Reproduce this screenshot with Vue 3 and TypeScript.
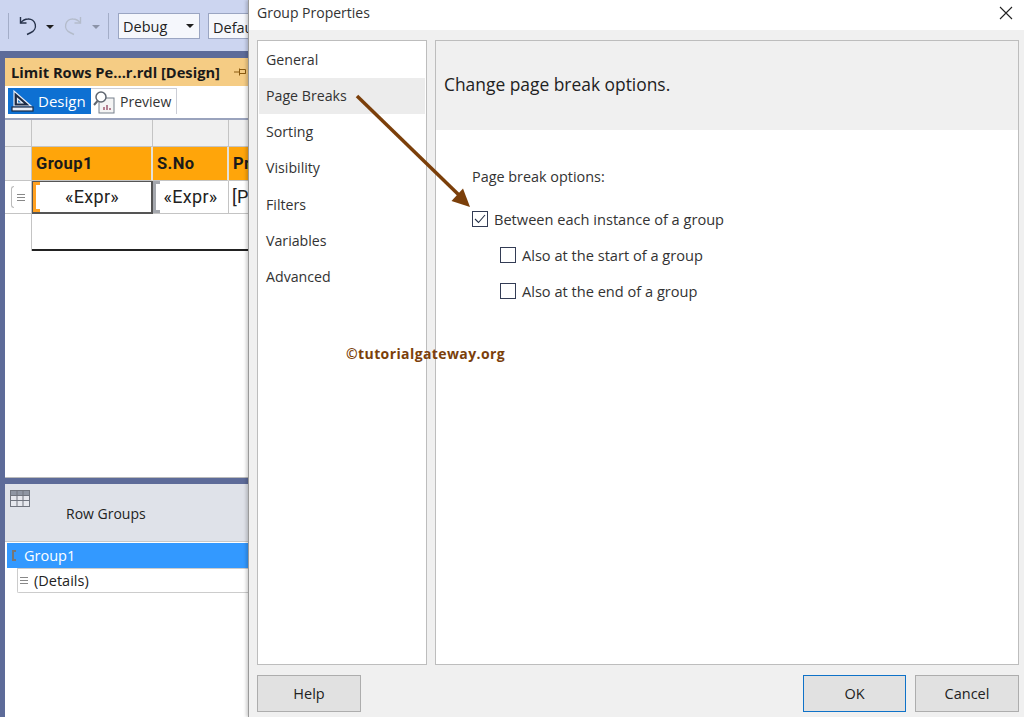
<script setup lang="ts">
const navItems = ['General', 'Page Breaks', 'Sorting', 'Visibility', 'Filters', 'Variables', 'Advanced']
const subOptions = ['Also at the start of a group', 'Also at the end of a group']
</script>

<template>
  <div class="desktop">
    <div class="ide">
      <div class="toolbar">
        <span class="sep"></span>
        <svg class="tool-icon" width="20" height="22" viewBox="0 0 20 22" fill="none" stroke="#26324a" stroke-width="1.4">
          <path d="M2.500 8C5 5 8 4 10 4a7 7 0 0 1 3 13.500L9 19.500" />
          <path d="M2.500 2v6h6" />
        </svg>
        <span class="caret"></span>
        <svg class="tool-icon" width="20" height="22" viewBox="0 0 20 22" fill="none" stroke="#b4bccb" stroke-width="1.4">
          <path d="M17.500 8C15 5 12 4 10 4a7 7 0 0 0-3 13.500l4 2" />
          <path d="M17.500 2v6h-6" />
        </svg>
        <span class="caret off"></span>
        <span class="sep"></span>
        <div class="combo debug">Debug<span class="caret"></span></div>
        <div class="combo">Default</div>
      </div>
      <div class="workspace">
        <div class="doc-tab">
          <span>Limit Rows Pe...r.rdl [Design]</span>
          <svg width="14" height="10" viewBox="0 0 14 10" stroke="#8a5a10" fill="none">
            <path d="M0 5h5M5.500 1.500v7M5.500 2.500h6v4h-6M5.500 6.500h6" />
          </svg>
        </div>
        <div class="view-tabs">
          <div class="view-tab on">
            <svg width="24" height="24" viewBox="0 0 24 24" fill="none" stroke="#fff" stroke-width="1.200">
              <path d="M3 2v15h17L3 2z" fill="#1c2a44" stroke="#e8eef8" />
              <path d="M6.500 9.500v4.500h5z" fill="#0e70c0" stroke="#e8eef8" />
              <rect x="1" y="18" width="21" height="4" fill="#e8eef8" stroke="#1c2a44" />
            </svg>
            <span>Design</span>
          </div>
          <div class="view-tab">
            <svg width="22" height="24" viewBox="0 0 22 24" fill="none">
              <rect x="6" y="8" width="15" height="15" fill="#f4f4f4" stroke="#77808c" />
              <circle cx="8" cy="7" r="5" fill="#fff" stroke="#5f6670" stroke-width="1.500" />
              <path d="M4.500 11 1 15" stroke="#5f6670" stroke-width="2" />
              <path d="M11 20v-3M14 20v-5M17 20v-2" stroke="#a05a70" stroke-width="1.500" />
            </svg>
            <span>Preview</span>
          </div>
        </div>
        <div class="design-surface">
          <div class="tablix">
            <div class="corner"></div>
            <div class="col-head"></div>
            <div class="col-head"></div>
            <div class="col-head last"></div>

            <div class="row-head"></div>
            <div class="hd">Group1</div>
            <div class="hd">S.No</div>
            <div class="hd last">Pr</div>

            <div class="row-head detail">
              <span class="bracket"></span>
              <span class="lines"></span>
            </div>
            <div class="cell selected">
              <span class="handle orange"></span>
              «Expr»
            </div>
            <div class="cell second">
              <span class="handle grey"></span>
              «Expr»
            </div>
            <div class="cell last left">[P</div>

            <div class="blank-side"></div>
            <div class="blank"></div>
          </div>
        </div>
        <div class="groups">
          <div class="groups-head">
            <svg class="grid-icon" width="20" height="17" viewBox="0 0 20 17">
              <rect x="0.500" y="0.500" width="19" height="16" fill="#e6e8ee" stroke="#70757f" />
              <rect x="1" y="1" width="18" height="4" fill="#8f96a3" />
              <path d="M0 5.500h20M0 10.500h20M7 0v17M13 0v17" stroke="#70757f" />
            </svg>
            <span>Row Groups</span>
          </div>
          <div class="groups-list">
            <div class="group-row">
              <span class="group-bracket"></span>
              Group1
            </div>
            <div class="details-row">
              <span class="lines"></span>
              (Details)
            </div>
          </div>
        </div>
      </div>
    </div>

    <div class="dialog">
      <div class="titlebar">
        <span>Group Properties</span>
        <svg width="14" height="14" viewBox="0 0 14 14" stroke="#222" stroke-width="1.100">
          <path d="M1 1l12 12M13 1 1 13" />
        </svg>
      </div>
      <div class="dialog-body">
        <div class="panes">
          <ul class="nav">
            <li v-for="item in navItems" :key="item" :class="{ active: item === 'Page Breaks' }">{{ item }}</li>
          </ul>
          <div class="content">
            <div class="content-head">Change page break options.</div>
            <div class="content-main">
              <div class="opt-title">Page break options:</div>
              <label class="option">
                <span class="check">
                  <svg width="16" height="16" viewBox="0 0 16 16" fill="none" stroke="#26324a" stroke-width="1.100">
                    <path d="M3 8l3.500 3.500L13 4" />
                  </svg>
                </span>
                Between each instance of a group
              </label>
              <label v-for="opt in subOptions" :key="opt" class="option sub">
                <span class="check"></span>
                {{ opt }}
              </label>
              <div class="watermark">©tutorialgateway.org</div>
            </div>
          </div>
        </div>
        <div class="buttons">
          <button class="btn">Help</button>
          <span class="spacer"></span>
          <button class="btn primary">OK</button>
          <button class="btn">Cancel</button>
        </div>
      </div>
    </div>

    <svg class="arrow" width="1024" height="717" viewBox="0 0 1024 717">
      <path d="M357 96 461 197" stroke="#7b3f0a" stroke-width="3.500" fill="none" />
      <path d="M470 207 451.500 201 463 188.500z" fill="#7b3f0a" />
    </svg>
  </div>
</template>

<style scoped>
.desktop {
  position: relative;
  width: 1024px;
  height: 717px;
  overflow: hidden;
  font-family: "Open Sans", "Noto Sans", sans-serif;
  color: #222;
}

.ide {
  width: 248px;
  height: 717px;
  display: flex;
  flex-direction: column;
  background: #5d6b99;
}

.toolbar {
  height: 51px;
  flex-shrink: 0;
  background: #ccd5f0;
  display: flex;
  align-items: center;
  padding: 0 0 0 8px;
  box-sizing: border-box;
  white-space: nowrap;
  overflow: hidden;
}

.sep {
  width: 1px;
  height: 26px;
  flex-shrink: 0;
  background: #a3adc8;
  margin-right: 9px;
}

.tool-icon { flex-shrink: 0; }

.caret {
  width: 0;
  height: 0;
  border-left: 4px solid transparent;
  border-right: 4px solid transparent;
  border-top: 4px solid #1e1e1e;
  margin: 2px 9px 0 8px;
  flex-shrink: 0;
}

.caret.off { border-top-color: #8b93a8; margin-left: 9px; margin-right: 8px; }

.combo {
  height: 26px;
  box-sizing: border-box;
  border: 1px solid #9aa5c2;
  background: #f5f7fc;
  font-size: 14.500px;
  line-height: 25px;
  padding: 1px 0 0 4px;
  flex-shrink: 0;
  width: 80px;
}

.combo.debug {
  width: 82px;
  margin-right: 8px;
  display: flex;
  align-items: center;
  justify-content: space-between;
}

.combo.debug .caret { margin: 0 5px 0 0; }

.workspace {
  flex: 1;
  margin: 7px 0 0 5px;
  display: flex;
  flex-direction: column;
  min-height: 0;
}

.doc-tab {
  height: 28px;
  flex-shrink: 0;
  background: #f5cc84;
  display: flex;
  align-items: center;
  justify-content: space-between;
  padding-left: 6px;
  font-size: 14.700px;
  font-weight: 700;
  color: #1a1a1a;
  white-space: nowrap;
}

.view-tabs {
  height: 34px;
  flex-shrink: 0;
  background: #fff;
  display: flex;
  align-items: flex-start;
  padding: 2px 0 0 3px;
  box-sizing: border-box;
  border-bottom: 2px solid #9aa3bd;
}

.view-tab {
  height: 26px;
  display: flex;
  align-items: center;
  gap: 5px;
  font-size: 14px;
  padding: 0 5px 0 2px;
  box-sizing: border-box;
  border: 1px solid #ccced6;
  border-left: none;
  border-bottom: none;
  color: #333;
}

.view-tab.on {
  width: 83px;
  background: #0e70d2;
  border: none;
  color: #fff;
  padding-left: 3px;
  gap: 3px;
  font-size: 15px;
}

.design-surface {
  flex: 0 0 358px;
  background: #fff;
  overflow: hidden;
  border-bottom: 1px solid #bbb;
  box-sizing: border-box;
}

.tablix {
  display: grid;
  grid-template-columns: 27px 121px 76px 1fr;
  grid-template-rows: 27px 34px 33px 37px;
  font-family: "Roboto", "Noto Sans", sans-serif;
}

.corner, .col-head, .row-head {
  background: #f0f0f0;
  border-right: 1px solid #c4c4c4;
  border-bottom: 1px solid #c4c4c4;
  box-sizing: border-box;
}

.col-head.last { border-right: none; }

.row-head.detail {
  background: #fff;
  display: flex;
  align-items: center;
  justify-content: center;
  gap: 3px;
  position: relative;
}

.bracket {
  width: 3px;
  height: 22px;
  border: 1px solid #bbb;
  border-right: none;
  border-radius: 3px 0 0 3px;
  box-sizing: border-box;
}

.lines {
  display: inline-block;
  width: 8px;
  height: 7px;
  flex-shrink: 0;
  box-sizing: border-box;
  border-top: 1px solid #888;
  border-bottom: 1px solid #888;
  background: linear-gradient(#888, #888) center / 100% 1px no-repeat;
}

.hd {
  background: #ffa50a;
  font-weight: 700;
  font-size: 16.500px;
  color: #1a1a1a;
  display: flex;
  align-items: center;
  padding-left: 4px;
  border-right: 2px solid #e5e1d8;
  border-bottom: 1px solid #c4c4c4;
  box-sizing: border-box;
  letter-spacing: 0.400px;
}

.hd.last { border-right: none; }

.cell {
  position: relative;
  display: flex;
  align-items: center;
  justify-content: center;
  font-size: 18px;
  letter-spacing: 0.300px;
  color: #222;
  padding-bottom: 2px;
  border-right: 1px solid #c4c4c4;
  border-bottom: 1px solid #c4c4c4;
  box-sizing: border-box;
}

.cell.left { justify-content: flex-start; padding-left: 3px; border-right: none; }

.cell.selected { border: 1px solid #555; border-bottom-width: 2px; border-right-width: 2px; }

.handle {
  position: absolute;
  left: 0;
  top: 0;
  bottom: 0;
  width: 7px;
  border-left: 3px solid;
  border-top: 3px solid;
  border-bottom: 3px solid;
  border-right: none;
  box-sizing: border-box;
}

.handle.orange { color: #ffa020; }
.handle.grey { color: #a5a8ae; }

.blank-side { border-right: 1px solid #c4c4c4; box-sizing: border-box; }

.blank {
  grid-column: 2 / 5;
  border-bottom: 2px solid #222;
}

.groups {
  flex: 1;
  margin-top: 6px;
  background: #fff;
  display: flex;
  flex-direction: column;
}

.groups-head {
  height: 58px;
  flex-shrink: 0;
  background: #dfe2e9;
  border-bottom: 1px solid #c8c8c8;
  box-sizing: border-box;
  position: relative;
  font-size: 14px;
  padding: 20px 0 0 61px;
}

.grid-icon {
  position: absolute;
  left: 5px;
  top: 6px;
}

.groups-list { padding: 1px 0 0 2px; }

.group-row {
  height: 25px;
  background: #3399ff;
  color: #fff;
  display: flex;
  align-items: center;
  padding-left: 5px;
  gap: 8px;
  font-size: 14.500px;
}

.group-bracket {
  width: 4px;
  height: 11px;
  border: 2px solid #777;
  border-right: none;
  box-sizing: border-box;
}

.details-row {
  height: 25px;
  margin: 0 0 0 10px;
  border: 1px solid #ccc;
  border-right: none;
  border-radius: 0 0 0 2px;
  box-sizing: border-box;
  display: flex;
  align-items: center;
  gap: 6px;
  padding-left: 2px;
  font-size: 14.500px;
}

.dialog {
  position: absolute;
  left: 248px;
  top: 0;
  width: 776px;
  height: 717px;
  background: #f0f0f0;
  border-left: 1px solid #9a9a9a;
  box-sizing: border-box;
  box-shadow: -2px 0 3px rgba(0, 0, 0, 0.18);
  display: flex;
  flex-direction: column;
}

.titlebar {
  height: 30px;
  flex-shrink: 0;
  background: #fff;
  display: flex;
  align-items: center;
  justify-content: space-between;
  padding: 0 11px 5px 8px;
  box-sizing: border-box;
  font-size: 14px;
  color: #333;
}

.dialog-body {
  flex: 1;
  min-height: 0;
  display: flex;
  flex-direction: column;
  padding: 10px 5px 5px 8px;
}

.panes {
  flex: 1;
  min-height: 0;
  display: flex;
  gap: 8px;
}

.nav {
  width: 170px;
  flex-shrink: 0;
  margin: 0;
  padding: 1px;
  list-style: none;
  background: #fff;
  border: 1px solid #bdbdbd;
  box-sizing: border-box;
}

.nav li {
  height: 36.150px;
  line-height: 35.500px;
  padding-left: 7px;
  font-size: 14.200px;
  color: #333;
}

.nav li.active { background: #ececec; }

.content {
  flex: 1;
  display: flex;
  flex-direction: column;
  border: 1px solid #bdbdbd;
  box-sizing: border-box;
  background: #fff;
}

.content-head {
  height: 89px;
  flex-shrink: 0;
  background: #f0f0f0;
  padding: 31px 0 0 8px;
  box-sizing: border-box;
  font-size: 17.400px;
  line-height: 24px;
  color: #222;
}

.content-main {
  flex: 1;
  padding: 37px 0 0 36px;
  font-size: 14.600px;
  color: #333;
}

.opt-title {
  height: 34px;
  line-height: 20px;
  font-size: 14.400px;
}

.option {
  display: flex;
  align-items: center;
  gap: 6px;
  height: 36px;
}

.option.sub { margin-left: 28px; }

.check {
  width: 16px;
  height: 16px;
  border: 1px solid #333c55;
  box-sizing: border-box;
  display: flex;
  align-items: center;
  justify-content: center;
  flex-shrink: 0;
  background: #fff;
}

.check svg { flex-shrink: 0; }

.watermark {
  margin: 35px 0 0 -126px;
  font-family: "Open Sans", sans-serif;
  font-weight: 700;
  font-size: 14px;
  letter-spacing: 0.400px;
  color: #7b3f0a;
}

.buttons {
  display: flex;
  gap: 9px;
  margin-top: 10px;
}

.spacer { flex: 1; }

.btn {
  width: 104px;
  height: 37px;
  background: #e1e1e1;
  border: 1px solid #adadad;
  font-family: inherit;
  font-size: 14.500px;
  color: #222;
  padding: 0;
}

.btn.primary { width: 103px; border: 1px solid #0f72c8; }

.arrow {
  position: absolute;
  left: 0;
  top: 0;
  pointer-events: none;
}
</style>

<style>
html, body { margin: 0; background: #fff; overflow: hidden; }
</style>
